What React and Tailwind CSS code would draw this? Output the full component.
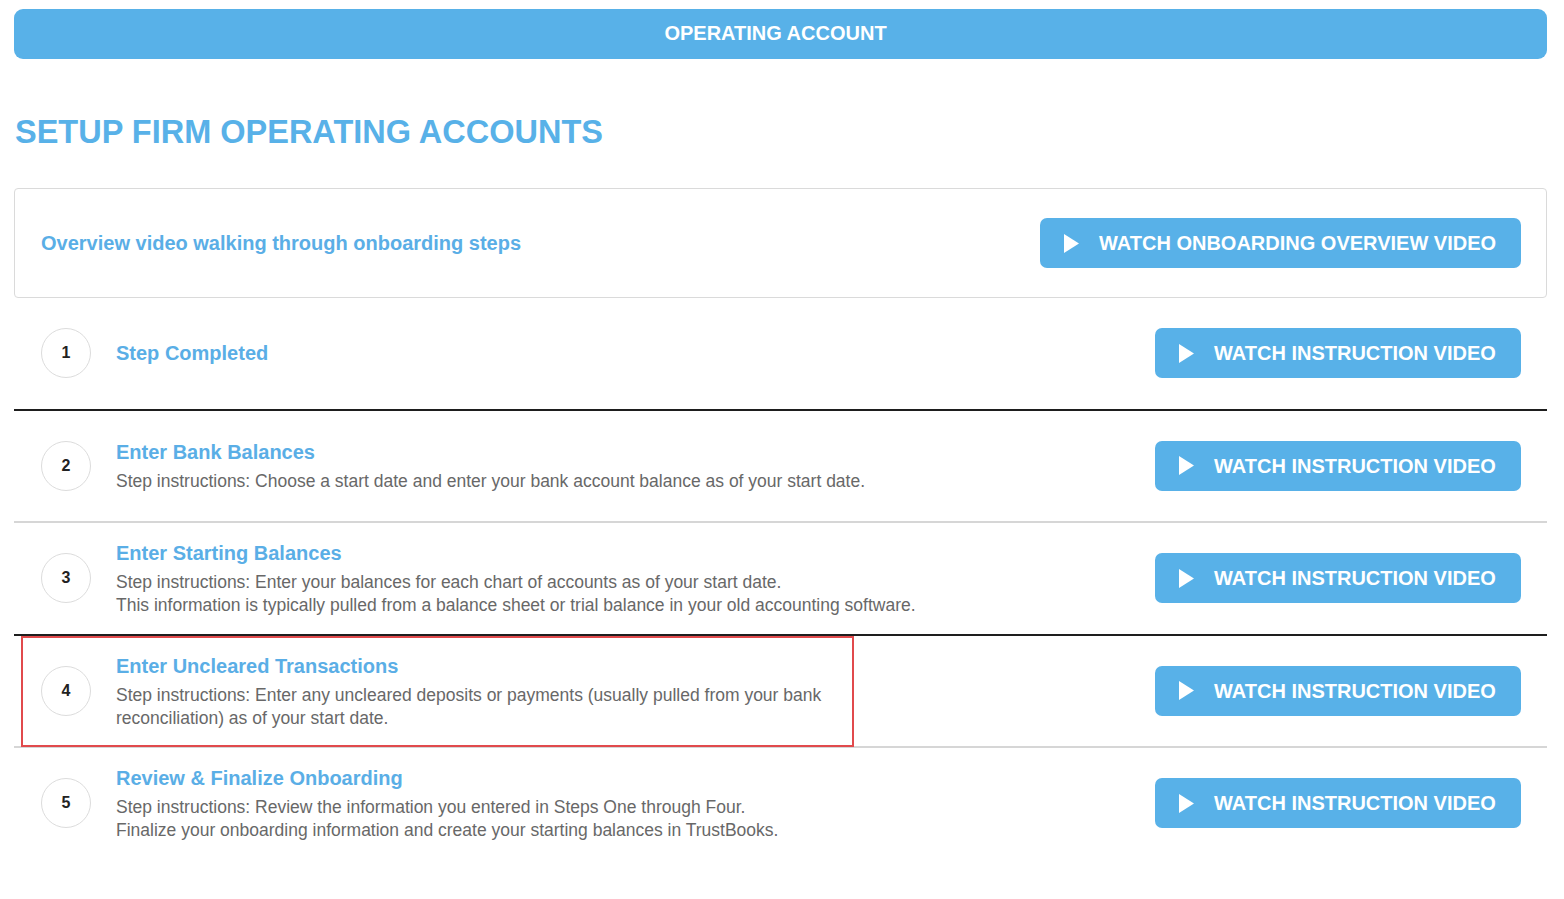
import React from 'react';

const steps = [
  { num: 1, title: 'Step Completed', lines: [], divider: 'black' },
  {
    num: 2,
    title: 'Enter Bank Balances',
    lines: ['Step instructions: Choose a start date and enter your bank account balance as of your start date.'],
    divider: 'gray',
  },
  {
    num: 3,
    title: 'Enter Starting Balances',
    lines: [
      'Step instructions: Enter your balances for each chart of accounts as of your start date.',
      'This information is typically pulled from a balance sheet or trial balance in your old accounting software.',
    ],
    divider: 'black',
  },
  {
    num: 4,
    title: 'Enter Uncleared Transactions',
    lines: [
      'Step instructions: Enter any uncleared deposits or payments (usually pulled from your bank',
      'reconciliation) as of your start date.',
    ],
    divider: 'gray',
    highlight: true,
  },
  {
    num: 5,
    title: 'Review & Finalize Onboarding',
    lines: [
      'Step instructions: Review the information you entered in Steps One through Four.',
      'Finalize your onboarding information and create your starting balances in TrustBooks.',
    ],
  },
];

const PlayIcon = () => (
  <svg width="15" height="19" viewBox="0 0 15 19" className="shrink-0">
    <path d="M0 0 L15 9.5 L0 19 Z" fill="#fff" />
  </svg>
);

const VideoButton = ({ label, wide }) => (
  <button
    className={
      'flex items-center h-[50px] rounded-[7px] bg-[#58b1e8] text-white font-bold text-[20px] pl-[24px] ' +
      (wide ? 'w-[481px]' : 'w-[366px]')
    }
  >
    <PlayIcon />
    <span className="ml-[20px] leading-none">{label}</span>
  </button>
);

const StepRow = ({ step }) => (
  <>
    <div className="relative flex items-center h-[110.5px] pl-[27px] pr-[26px]">
      {step.highlight && (
        <div className="absolute left-[7px] top-0 w-[833px] h-[111px] border-[2px] border-[#e14a4c] pointer-events-none" />
      )}
      <div className="w-[50px] h-[50px] rounded-full border border-[#dcdcdc] flex items-center justify-center text-[16px] font-bold text-[#222] shrink-0">
        {step.num}
      </div>
      <div className="ml-[25px] flex-1">
        <div className={'font-bold text-[#5aaee6] text-[20px] leading-[28px] ' + (step.lines.length ? 'mb-[4px]' : '')}>
          {step.title}
        </div>
        {step.lines.map((l, i) => (
          <div key={i} className="text-[17.5px] leading-[23px] text-[#686868]">
            {l}
          </div>
        ))}
      </div>
      <VideoButton label="WATCH INSTRUCTION VIDEO" />
    </div>
    {step.divider === 'black' && <div className="h-[2px] bg-[#1e1e1e]" />}
    {step.divider === 'gray' && <div className="h-[2px] bg-[#d6d6d6]" />}
  </>
);

export default function App() {
  return (
    <div className="min-h-screen bg-white font-['Liberation_Sans',Arial,sans-serif] pl-[14px] pr-[17px] pt-[9px]">
      <div className="h-[50px] rounded-[9px] bg-[#58b1e8] flex items-center justify-center pr-[10px] pb-[2px] text-white font-bold text-[20px]">
        OPERATING ACCOUNT
      </div>

      <h1 className="mt-[53px] pl-[1px] text-[32.5px] leading-[40px] font-bold text-[#58b1e8]">
        SETUP FIRM OPERATING ACCOUNTS
      </h1>

      <div className="mt-[36px] h-[110px] border border-[#dadada] rounded-[4px] flex items-center justify-between pl-[26px] pr-[25px]">
        <div className="text-[20px] font-bold text-[#5aaee6] pb-[1px]">Overview video walking through onboarding steps</div>
        <VideoButton label="WATCH ONBOARDING OVERVIEW VIDEO" wide />
      </div>

      <div>
        {steps.map((s) => (
          <StepRow key={s.num} step={s} />
        ))}
      </div>
    </div>
  );
}
